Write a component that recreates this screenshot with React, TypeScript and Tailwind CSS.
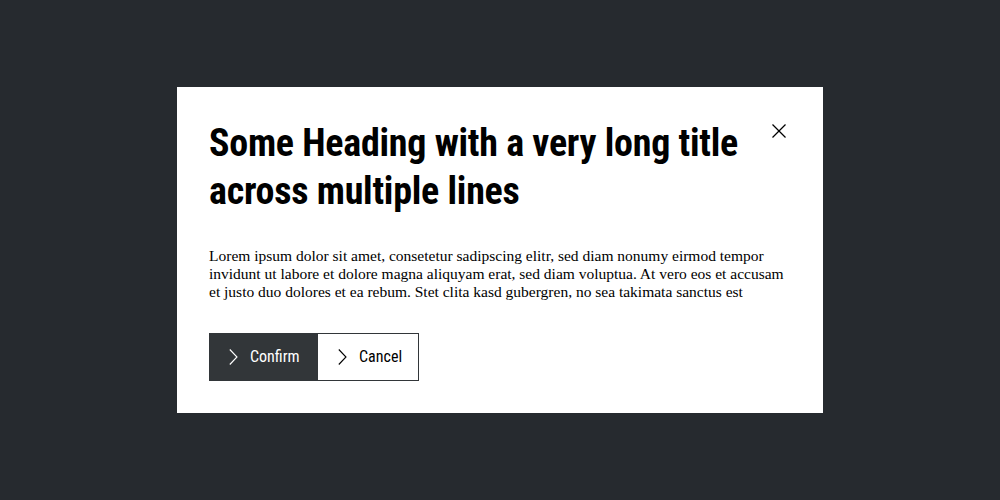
const Chevron = () => (
  <svg width="9" height="16" viewBox="0 0 9 16" fill="none" stroke="currentColor" strokeWidth="1.1">
    <polyline points="0.8,0.5 8,8 0.8,15.5" />
  </svg>
);

const App = () => {
  return (
    <div className="w-[1000px] h-[500px] bg-[#262a2f] flex items-center justify-center">
      <div className="relative w-[646px] bg-white p-8">
        <button className="absolute left-[595px] top-[37px] text-black">
          <svg width="14" height="14" viewBox="0 0 14 14" stroke="currentColor" strokeWidth="1.3">
            <line x1="0.5" y1="0.5" x2="13.5" y2="13.5" />
            <line x1="13.5" y1="0.5" x2="0.5" y2="13.5" />
          </svg>
        </button>
        <h2 className="text-[38px] leading-[48px] font-bold text-black pr-10 tracking-[-0.25px] font-['Roboto_Condensed',sans-serif]">
          Some Heading with a very long title across multiple lines
        </h2>
        <p className="mt-8 text-[15.5px] leading-[18px] text-black font-['Liberation_Serif',serif]">
          Lorem ipsum dolor sit amet, consetetur sadipscing elitr, sed diam nonumy eirmod tempor invidunt ut
          labore et dolore magna aliquyam erat, sed diam voluptua. At vero eos et accusam et justo duo dolores
          et ea rebum. Stet clita kasd gubergren, no sea takimata sanctus est
        </p>
        <div className="mt-8 flex font-['Roboto_Condensed',sans-serif] text-[16px]">
          <button className="h-12 w-[108px] bg-[#323639] text-white flex items-center pl-5 gap-3">
            <Chevron />
            <span>Confirm</span>
          </button>
          <button className="h-12 w-[102px] border border-[#323639] text-black flex items-center pl-5 gap-3">
            <Chevron />
            <span>Cancel</span>
          </button>
        </div>
      </div>
    </div>
  );
};

export default App;
